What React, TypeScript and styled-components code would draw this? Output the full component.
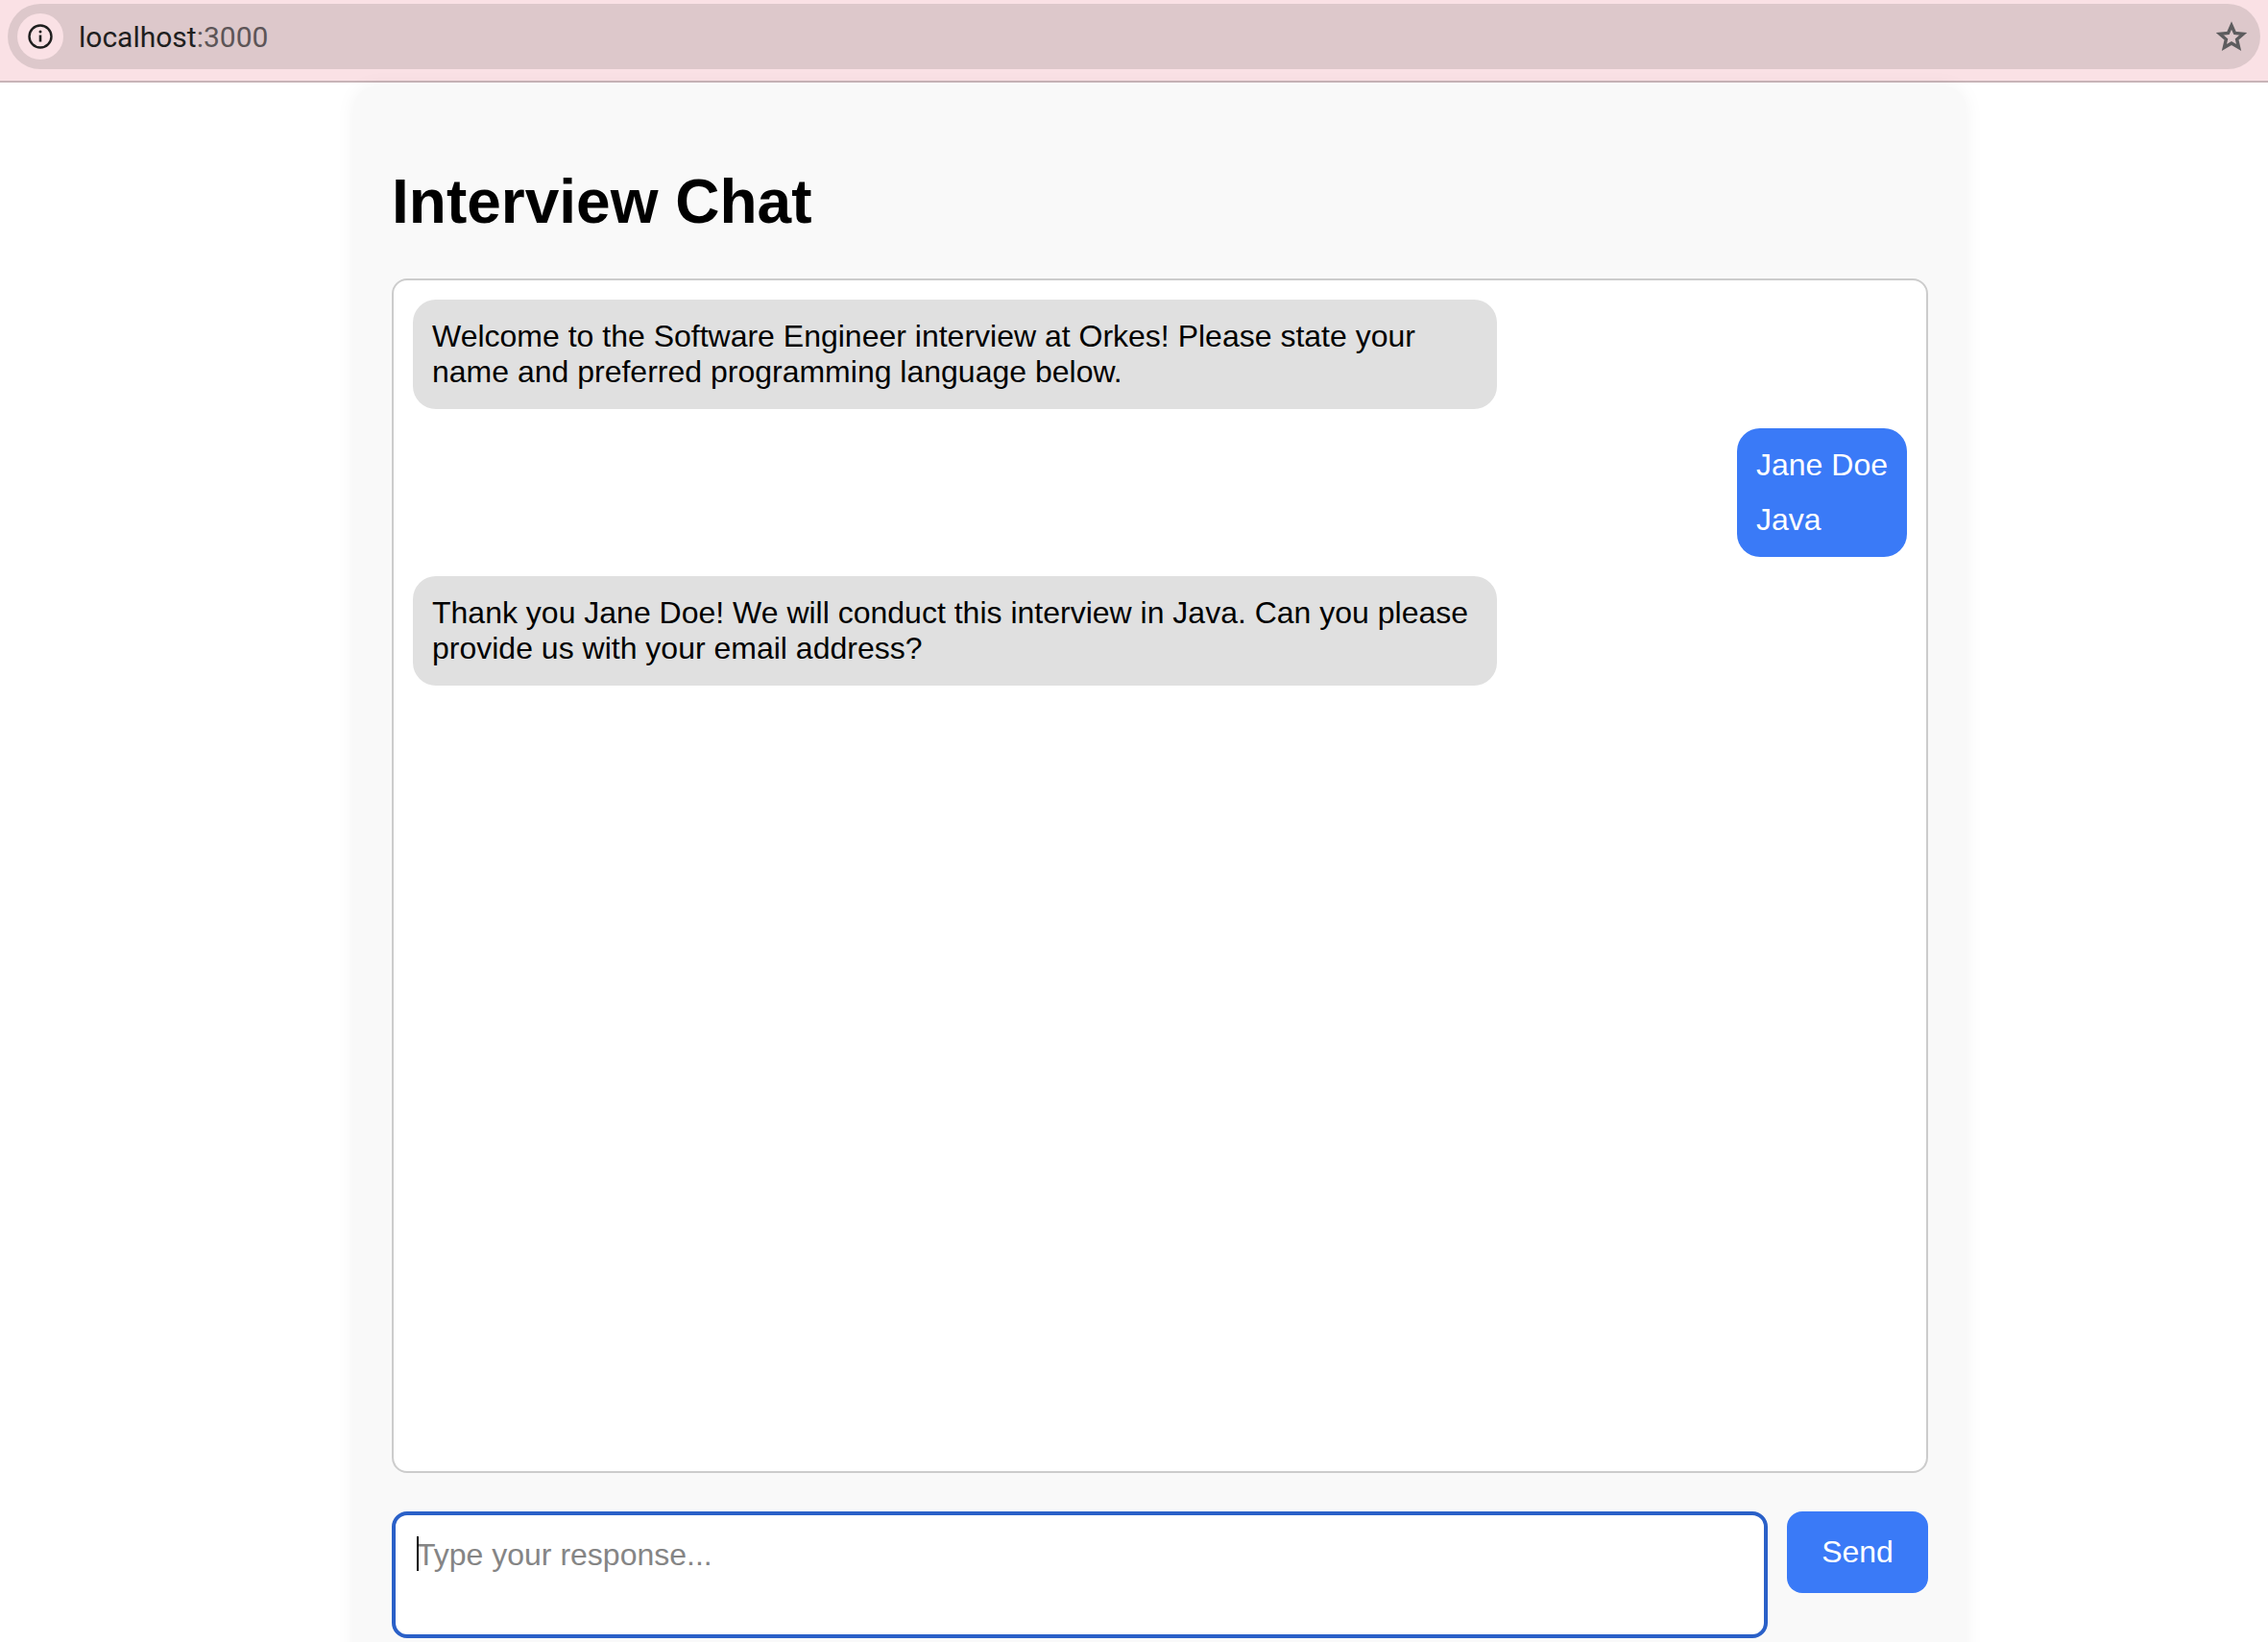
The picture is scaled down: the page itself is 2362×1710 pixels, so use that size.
import React from "react";
import styled, { createGlobalStyle } from "styled-components";

const GlobalStyle = createGlobalStyle`
  html, body {
    margin: 0;
    height: 100%;
    overflow: hidden;
    background: #fff;
    font-family: "Liberation Sans", Arial, sans-serif;
  }
`;

const BrowserBar = styled.header`
  box-sizing: border-box;
  height: 86px;
  padding: 4px 8px 12px;
  background: #fae1e5;
  border-bottom: 2px solid #c8b4b8;
`;

const Omnibox = styled.div`
  display: flex;
  align-items: center;
  height: 68px;
  padding: 0 10px;
  border-radius: 34px;
  background: #ddc8cb;
`;

const InfoChip = styled.span`
  display: flex;
  align-items: center;
  justify-content: center;
  width: 48px;
  height: 48px;
  border-radius: 50%;
  background: #fae1e5;
  color: #1f1f1f;
`;

const Url = styled.span`
  flex: 1;
  margin-left: 16px;
  font-family: Roboto, sans-serif;
  font-size: 30px;
  color: #1f1f1f;
`;

const Port = styled.span`
  color: #5c5557;
`;

const Star = styled.svg`
  width: 32px;
  height: 32px;
  margin-right: 4px;
  color: #5d5c5e;
`;

const Card = styled.main`
  box-sizing: border-box;
  width: 1680px;
  margin: 4px 0 0 368px;
  padding: 83px 40px 40px;
  background: #f9f9f9;
  border-radius: 24px;
  box-shadow: 0 0 20px rgba(0, 0, 0, 0.05);
`;

const Title = styled.h1`
  margin: 0 0 43px;
  font-size: 64px;
  font-weight: 700;
  color: #000;
`;

const ChatBox = styled.section`
  box-sizing: border-box;
  display: flex;
  flex-direction: column;
  gap: 20px;
  height: 1244px;
  padding: 20px;
  background: #fff;
  border: 2px solid #ccc;
  border-radius: 16px;
`;

const Bubble = styled.div<{ $own?: boolean }>`
  box-sizing: border-box;
  padding: 20px;
  border-radius: 24px;
  font-size: 32px;
  max-width: 1129px;
  align-self: ${(p) => (p.$own ? "flex-end" : "flex-start")};
  background: ${(p) => (p.$own ? "#3a7af7" : "#e0e0e0")};
  color: ${(p) => (p.$own ? "#fff" : "#000")};
`;

const BubbleLine = styled.p`
  margin: 0 0 20px;
  &:last-child {
    margin-bottom: 0;
  }
`;

const Composer = styled.form`
  display: flex;
  align-items: flex-start;
  gap: 20px;
  margin-top: 40px;
`;

const InputWrap = styled.div`
  position: relative;
  flex: 1;
  display: flex;
`;

const Input = styled.textarea`
  box-sizing: border-box;
  flex: 1;
  height: 132px;
  padding: 23px 22px 20px;
  border: 4px solid #2a60c8;
  border-radius: 16px;
  outline: none;
  resize: none;
  background: #fff;
  font-family: inherit;
  font-size: 32px;
  &::placeholder {
    color: #858585;
  }
`;

const Caret = styled.span`
  position: absolute;
  left: 26px;
  top: 26px;
  width: 2px;
  height: 36px;
  background: #000;
`;

const SendButton = styled.button`
  width: 147px;
  height: 85px;
  border: none;
  border-radius: 16px;
  background: #3a7af7;
  color: #fff;
  font-family: inherit;
  font-size: 32px;
`;

const App: React.FC = () => {
  return (
    <>
      <GlobalStyle />
      <BrowserBar>
        <Omnibox>
          <InfoChip>
            <svg width="28" height="28" viewBox="0 0 28 28" fill="none" stroke="currentColor">
              <circle cx="14" cy="14" r="11.5" strokeWidth="2.4" />
              <path d="M14 12.5v7" strokeWidth="2.6" />
              <circle cx="14" cy="9" r="1.5" fill="currentColor" stroke="none" />
            </svg>
          </InfoChip>
          <Url>
            localhost<Port>:3000</Port>
          </Url>
          <Star viewBox="0 0 32 32" fill="none" stroke="currentColor" strokeWidth="3.4">
            <path d="M16 4.5l3.5 8 8.7.8-6.6 5.7 2 8.5-7.6-4.5-7.6 4.5 2-8.5-6.6-5.7 8.7-.8z" />
          </Star>
        </Omnibox>
      </BrowserBar>
      <Card>
        <Title>Interview Chat</Title>
        <ChatBox>
          <Bubble>
            Welcome to the Software Engineer interview at Orkes! Please state your name and
            preferred programming language below.
          </Bubble>
          <Bubble $own>
            <BubbleLine>Jane Doe</BubbleLine>
            <BubbleLine>Java</BubbleLine>
          </Bubble>
          <Bubble>
            Thank you Jane Doe! We will conduct this interview in Java. Can you please provide us
            with your email address?
          </Bubble>
        </ChatBox>
        <Composer onSubmit={(e) => e.preventDefault()}>
          <InputWrap>
            <Input placeholder="Type your response..." />
            <Caret />
          </InputWrap>
          <SendButton type="submit">Send</SendButton>
        </Composer>
      </Card>
    </>
  );
};

export default App;
